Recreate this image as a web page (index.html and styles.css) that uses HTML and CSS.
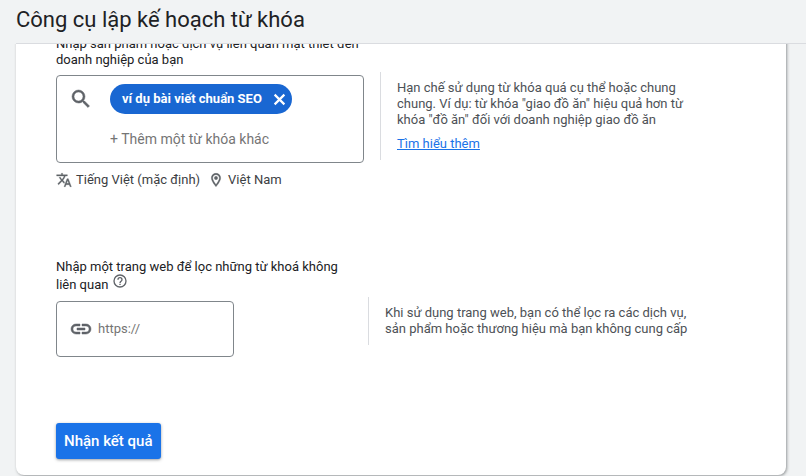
FILE: index.html
```html
<!DOCTYPE html>
<html lang="vi">
<head>
<meta charset="utf-8">
<meta name="viewport" content="width=device-width, initial-scale=1">
<title>Công cụ lập kế hoạch từ khóa</title>
<link rel="stylesheet" href="styles.css">
</head>
<body>
<header class="header"><h1 class="title">Công cụ lập kế hoạch từ khóa</h1></header>
<main class="viewport">
  <form class="card">
    <section class="keywords">
      <div class="keywords-main">
        <label class="label" for="keyword">Nhập sản phẩm hoặc dịch vụ liên quan mật thiết đến doanh nghiệp của bạn</label>
        <div class="keyword-box">
          <svg class="icon search" viewBox="0 0 24 24" aria-hidden="true"><path d="M15.5 14h-.79l-.28-.27A6.47 6.47 0 0 0 16 9.5 6.5 6.5 0 1 0 9.5 16c1.61 0 3.09-.59 4.23-1.57l.27.28v.79l5 4.99L20.49 19l-4.99-5zm-6 0a4.5 4.5 0 1 1 0-9 4.5 4.5 0 0 1 0 9z"/></svg>
          <div class="entries">
            <span class="chip">ví dụ bài viết chuẩn SEO
              <button class="chip-remove" type="button" aria-label="Xóa">
                <svg viewBox="0 0 24 24" aria-hidden="true"><path d="M3 3L21 21M21 3L3 21"/></svg>
              </button>
            </span>
            <input class="keyword-input" id="keyword" type="text" placeholder="+ Thêm một từ khóa khác">
          </div>
        </div>
        <div class="targeting">
          <button class="target" type="button"><svg class="icon small" viewBox="0 0 24 24" aria-hidden="true"><path d="M12.87 15.07l-2.54-2.51.03-.03A17.52 17.52 0 0 0 14.07 6H17V4h-7V2H8v2H1v1.99h11.17C11.5 7.92 10.44 9.75 9 11.35 8.07 10.32 7.3 9.19 6.69 8h-2c.73 1.63 1.73 3.17 2.98 4.56l-5.09 5.02L4 19l5-5 3.11 3.11.76-2.04zM18.5 10h-2L12 22h2l1.12-3h4.75L21 22h2l-4.5-12zm-2.62 7l1.62-4.33L19.12 17h-3.24z"/></svg>Tiếng Việt (mặc định)</button>
          <button class="target" type="button"><svg class="icon small" viewBox="0 0 24 24" aria-hidden="true"><path d="M12 2C8.13 2 5 5.13 5 9c0 5.25 7 13 7 13s7-7.75 7-13c0-3.87-3.13-7-7-7zM7 9c0-2.76 2.24-5 5-5s5 2.24 5 5c0 2.88-2.88 7.19-5 9.88C9.92 16.21 7 11.85 7 9z"/><circle cx="12" cy="9" r="2.5"/></svg>Việt Nam</button>
        </div>
      </div>
      <aside class="hint keyword-hint">
        <p>Hạn chế sử dụng từ khóa quá cụ thể hoặc chung chung. Ví dụ: từ khóa "giao đồ ăn" hiệu quả hơn từ khóa "đồ ăn" đối với doanh nghiệp giao đồ ăn</p>
        <a class="link" href="#">Tìm hiểu thêm</a>
      </aside>
    </section>
    <section class="site">
      <div class="site-main">
        <label class="label site-label" for="site">Nhập một trang web để lọc những từ khoá không liên quan <svg class="help" viewBox="0 0 24 24" aria-hidden="true"><path d="M11 18h2v-2h-2v2zm1-16a10 10 0 1 0 0 20 10 10 0 0 0 0-20zm0 18a8 8 0 1 1 0-16 8 8 0 0 1 0 16zm0-14a4 4 0 0 0-4 4h2a2 2 0 1 1 4 0c0 2-3 1.75-3 5h2c0-2.25 3-2.5 3-5a4 4 0 0 0-4-4z"/></svg></label>
        <div class="site-box">
          <svg class="icon" viewBox="0 0 24 24" aria-hidden="true"><path d="M3.9 12A3.1 3.1 0 0 1 7 8.9h4V7H7a5 5 0 0 0 0 10h4v-1.9H7A3.1 3.1 0 0 1 3.9 12zM8 13h8v-2H8v2zm9-6h-4v1.9h4a3.1 3.1 0 0 1 0 6.2h-4V17h4a5 5 0 0 0 0-10z"/></svg>
          <input class="site-input" id="site" type="text" placeholder="https://">
        </div>
      </div>
      <aside class="hint site-hint">
        <p>Khi sử dụng trang web, bạn có thể lọc ra các dịch vụ, sản phẩm hoặc thương hiệu mà bạn không cung cấp</p>
      </aside>
    </section>
    <button class="submit" type="button">Nhận kết quả</button>
  </form>
</main>
</body>
</html>
```
FILE: styles.css
```css
* {
  box-sizing: border-box;
}

body {
  margin: 0;
  background: #f1f3f4;
  color: #202124;
  font: 13px/16px Roboto, sans-serif;
}

button,
input {
  border: 0;
  padding: 0;
  background: none;
  color: inherit;
  font: inherit;
}

p {
  margin: 0;
}

.header {
  margin-left: 16px;
  padding: 6px 0 9px;
  border-bottom: 1px solid #dadce0;
}

.title {
  margin: 0;
  font: 400 22px/28px Roboto, sans-serif;
}

.viewport {
  padding: 0 20px 8px 16px;
  overflow: hidden;
}

.card {
  padding: 0 40px 16px;
  border-radius: 0 0 8px 8px;
  background: #fff;
  box-shadow: 1px 1px 3px rgba(60, 64, 67, 0.5);
}

.keywords {
  display: flex;
  align-items: flex-start;
  gap: 16px;
  margin-top: -8px;
}

.keywords-main {
  flex: 0 0 308px;
}

.label {
  display: block;
}

.keyword-box {
  display: flex;
  align-items: flex-start;
  gap: 17px;
  height: 88px;
  margin-top: 7px;
  padding: 8px 12px;
  border: 1px solid #80868b;
  border-radius: 4px;
}

.icon {
  flex: none;
  width: 24px;
  height: 24px;
  fill: #5f6368;
  stroke: #5f6368;
  stroke-width: 0.5;
}

.search {
  margin-top: 3px;
}

.entries {
  flex: 1;
  min-width: 0;
}

.chip {
  display: inline-flex;
  align-items: center;
  gap: 8px;
  height: 30px;
  padding: 0 3px 0 12px;
  border-radius: 16px;
  background: #1967d2;
  color: #fff;
  font-weight: 700;
}

.chip-remove {
  display: flex;
  padding: 3px;
}

.chip-remove svg {
  width: 13px;
  height: 13px;
  fill: none;
  stroke: currentColor;
  stroke-width: 4;
}

.keyword-input {
  display: block;
  width: 100%;
  height: 24px;
  margin-top: 13px;
  font-size: 14px;
}

.keyword-input::placeholder,
.site-input::placeholder {
  color: #757575;
  opacity: 1;
}

.targeting {
  display: flex;
  gap: 8px;
  margin-top: 9px;
  color: #3c4043;
}

.target {
  display: flex;
  align-items: center;
  gap: 4px;
}

.small {
  width: 16px;
  height: 16px;
}

.hint {
  flex: 0 1 328px;
  padding-left: 16px;
  border-left: 1px solid #dadce0;
  color: #4d5156;
}

.keyword-hint {
  margin-top: 36px;
  padding-top: 8px;
  padding-bottom: 8px;
}

.link {
  display: inline-block;
  margin-top: 8px;
  color: #1a73e8;
}

.site {
  display: flex;
  align-items: flex-end;
  gap: 16px;
  margin-top: 70px;
}

.site-main {
  flex: 0 0 296px;
}

.site-label {
  line-height: 18px;
}

.help {
  width: 16px;
  height: 16px;
  margin-top: -4px;
  fill: #5f6368;
}

.site-box {
  display: flex;
  align-items: center;
  gap: 5px;
  width: 178px;
  height: 56px;
  margin-top: 7px;
  padding: 0 12px;
  border: 1px solid #80868b;
  border-radius: 4px;
}

.site-input {
  flex: 1;
  min-width: 0;
}

.site-hint {
  margin-bottom: 12px;
  padding-top: 8px;
  padding-bottom: 8px;
}

.submit {
  height: 36px;
  margin-top: 66px;
  padding: 0 8px;
  border-radius: 3px;
  background: #1a73e8;
  box-shadow: 0 1px 3px rgba(60, 64, 67, 0.5);
  color: #fff;
  font-size: 15px;
  font-weight: 500;
}
```
